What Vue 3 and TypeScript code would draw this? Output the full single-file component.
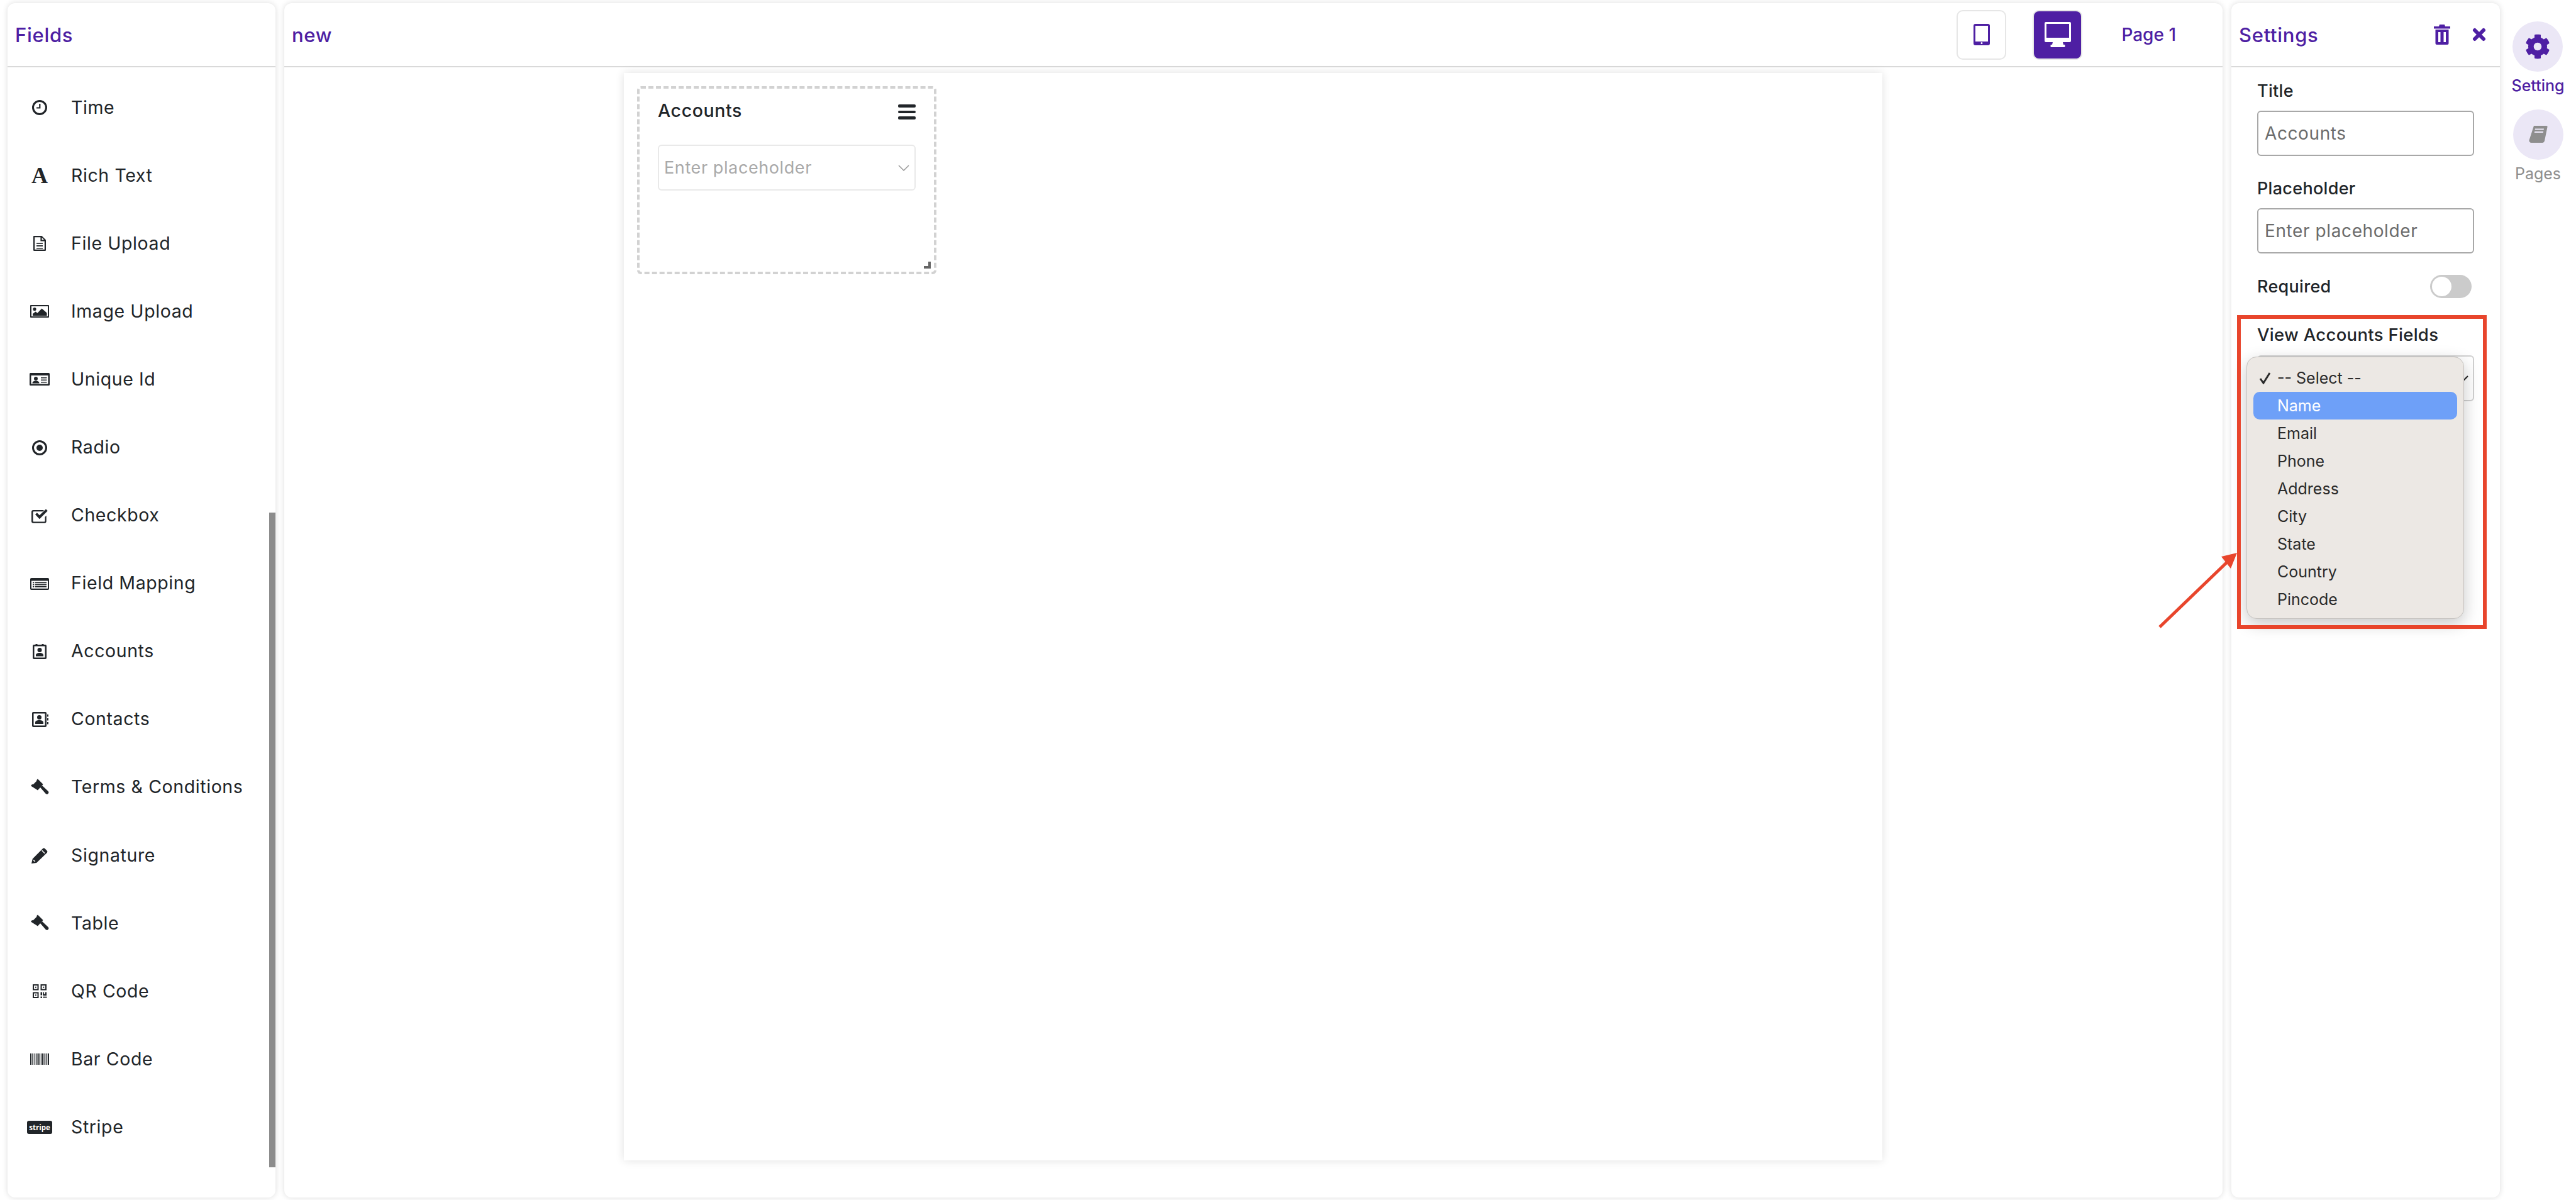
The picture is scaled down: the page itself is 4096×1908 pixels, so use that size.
<script setup lang="ts">
interface FieldRow {
  label: string
  icon: string
  glyph?: string
}

const fieldRows: FieldRow[] = [
  { label: 'Time', icon: 'clock' },
  { label: 'Rich Text', icon: '', glyph: 'A' },
  { label: 'File Upload', icon: 'file' },
  { label: 'Image Upload', icon: 'image' },
  { label: 'Unique Id', icon: 'card' },
  { label: 'Radio', icon: 'radio' },
  { label: 'Checkbox', icon: 'check' },
  { label: 'Field Mapping', icon: 'list' },
  { label: 'Accounts', icon: 'badge' },
  { label: 'Contacts', icon: 'book' },
  { label: 'Terms & Conditions', icon: 'gavel' },
  { label: 'Signature', icon: 'pencil' },
  { label: 'Table', icon: 'gavel' },
  { label: 'QR Code', icon: 'qr' },
  { label: 'Bar Code', icon: 'bars' },
  { label: 'Stripe', icon: '', glyph: 'stripe' }
]

const iconPaths: Record<string, string> = {
  clock:
    'M16 4a12 12 0 1 0 0 24a12 12 0 1 0 0-24z M16 7a9 9 0 1 1 0 18a9 9 0 1 1 0-18z M15.2 10h2.2v7.6H11v-2.1h4.2z',
  file:
    'M7 4h12.5L26 10.5V26.5a1.5 1.5 0 0 1-1.5 1.5h-17A1.5 1.5 0 0 1 6 26.5V5a1 1 0 0 1 1-1z M8.2 6.2v19.6h15.6V12.6h-6.4V6.2z M19.6 6.8v3.6h3.6z M11 15h10v1.8H11z M11 19h10v1.8H11z M11 23h10v1.6H11z',
  image:
    'M2 6h28a1 1 0 0 1 1 1v18a1 1 0 0 1-1 1H2a1 1 0 0 1-1-1V7a1 1 0 0 1 1-1z M3 8v16h26V8z M8 10a2.6 2.6 0 1 0 0 5.2a2.6 2.6 0 1 0 0-5.2z M5 23v-3l4.5-3.6 3 2.4 7-7.4 8 7v4.6z',
  card:
    'M1.5 6h29A1.5 1.5 0 0 1 32 7.5v17a1.5 1.5 0 0 1-1.5 1.5h-29A1.5 1.5 0 0 1 0 24.5v-17A1.5 1.5 0 0 1 1.5 6z M2.5 10v13.5h27V10z M10 12a3 3 0 1 0 0 6a3 3 0 1 0 0-6z M4.5 22.5c0-3 2.5-4 5.5-4s5.5 1 5.5 4z M18 13h9.5v1.6H18z M18 16.5h9.5v1.6H18z M18 20h9.5v1.6H18z',
  radio:
    'M16 4a12 12 0 1 0 0 24a12 12 0 1 0 0-24z M16 7a9 9 0 1 1 0 18a9 9 0 1 1 0-18z M16 11a5 5 0 1 0 0 10a5 5 0 1 0 0-10z',
  check:
    'M6 7h17l-2.2 2.2H6.5a1 1 0 0 0-1 1v14.3a1 1 0 0 0 1 1h17a1 1 0 0 0 1-1v-6.5l2.2-2.2v9a3 3 0 0 1-3 3H6a3 3 0 0 1-3-3V10a3 3 0 0 1 3-3z M9 14l2.8-2.8 4 4L26 5.5l2.8 2.8-13 12.9z',
  list:
    'M3 7h26a2 2 0 0 1 2 2v15a2 2 0 0 1-2 2H3a2 2 0 0 1-2-2V9a2 2 0 0 1 2-2z M3 11.5v12.3h26V11.5z M5 13.5h2.4v1.8H5z M5 16.8h2.4v1.8H5z M5 20h2.4v1.8H5z M9 13.5h18v1.8H9z M9 16.8h18v1.8H9z M9 20h18v1.8H9z',
  badge:
    'M7 5h2.5V4h3v1h7V4h3v1H25a2 2 0 0 1 2 2v19a2 2 0 0 1-2 2H7a2 2 0 0 1-2-2V7a2 2 0 0 1 2-2z M7.5 7.5v18h17v-18z M16 10a3.5 3.5 0 1 0 0 7a3.5 3.5 0 1 0 0-7z M10 23.5v-1.5c0-3 2.8-4 6-4s6 1 6 4v1.5z',
  book:
    'M6 4h19a2 2 0 0 1 2 2v20a2 2 0 0 1-2 2H6a2 2 0 0 1-2-2V6a2 2 0 0 1 2-2z M6.5 6.5v19h18v-19z M15.5 9a3.5 3.5 0 1 0 0 7a3.5 3.5 0 1 0 0-7z M9 23v-2c0-3 3-4 6.5-4s6.5 1 6.5 4v2z M28 8h2v3.5h-2z M28 14h2v3.5h-2z M28 20h2v3.5h-2z',
  gavel:
    'M13 2.5l8.5 8.5-8.5 9.500-11-7 2-2.500 1.500.5 6-6-.5-1z M17 16l3-3 9.500 9a2.600 2.600 0 0 1-4 3.800z',
  pencil:
    'M3 29l1.8-7.5L21 5.3c1-1 2.4-1 3.4 0l3.2 3.2c1 1 1 2.4 0 3.4L11 28z M19.2 8.8l4.4 4.4 1-1-4.4-4.4z M6 24.5l1.6 1.6 1.8-.5-2.8-2.8z',
  qr:
    'M5 5h9.5v9.5H5z M7 7v5.5h5.5V7z M8.8 8.8h2v2h-2z M17.5 5H27v9.5h-9.5z M19.5 7v5.5H25V7z M21.3 8.8h2v2h-2z M5 17.5h9.5V27H5z M7 19.5V25h5.5v-5.5z M8.8 21.3h2v2h-2z M17.5 17.5H20v5h-2.5z M21 17.5h1.8v3h2v-3H27v5.5h-5.5l-.5-1.5z M17.5 24.5H20V27h-2.5z M22 24.5h2V27h-2z M25.2 24.5H27V27h-1.8z',
  bars:
    'M1 7h1.2v18H1z M3 7h.6v18H3z M4.4 7h1.6v18H4.4z M7 7h.6v18H7z M8.6 7h.6v18h-.6z M10.2 7h1.2v18h-1.2z M12.4 7h.6v18h-.6z M14 7h1.6v18H14z M16.6 7h.6v18h-.6z M18.2 7h.8v18h-.8z M19.8 7h1.4v18h-1.4z M22 7h.6v18H22z M23.6 7h1.6v18h-1.6z M26 7h.8v18H26z M27.6 7h.6v18h-.6z M29 7h2v18h-2z'
}

const gearPath =
  'M487.4 315.7l-42.6-24.6c4.3-23.2 4.3-47 0-70.2l42.6-24.6c4.9-2.8 7.1-8.6 5.5-14-11.1-35.6-30-67.8-54.7-94.6-3.8-4.1-10-5.1-14.8-2.3L380.8 110c-17.9-15.4-38.5-27.3-60.8-35.1V25.8c0-5.6-3.9-10.5-9.4-11.7-36.7-8.2-74.3-7.8-109.2 0-5.5 1.2-9.4 6.1-9.4 11.7V75c-22.2 7.9-42.8 19.8-60.8 35.1L88.7 85.5c-4.9-2.8-11-1.9-14.8 2.3-24.7 26.7-43.6 58.9-54.7 94.6-1.7 5.4.6 11.2 5.5 14L67.3 221c-4.3 23.2-4.3 47 0 70.2l-42.6 24.6c-4.9 2.8-7.1 8.6-5.5 14 11.1 35.6 30 67.8 54.7 94.6 3.8 4.1 10 5.1 14.8 2.3l42.6-24.6c17.9 15.4 38.5 27.3 60.8 35.1v49.2c0 5.6 3.9 10.5 9.4 11.7 36.7 8.2 74.3 7.8 109.2 0 5.5-1.2 9.4-6.1 9.4-11.7v-49.2c22.2-7.9 42.8-19.8 60.8-35.1l42.6 24.6c4.9 2.8 11 1.9 14.8-2.3 24.7-26.7 43.6-58.9 54.7-94.6 1.5-5.5-.7-11.3-5.6-14.1zM256 336c-44.1 0-80-35.9-80-80s35.9-80 80-80 80 35.9 80 80-35.9 80-80 80z'

const menuOptions = ['Name', 'Email', 'Phone', 'Address', 'City', 'State', 'Country', 'Pincode']
</script>

<template>
  <div class="builder">
    <aside class="panel fields-panel">
      <header class="panel-head">
        <h2 class="panel-title">Fields</h2>
      </header>
      <div class="fields-scroll">
        <ul class="field-list">
          <li v-for="row in fieldRows" :key="row.label" class="field-row">
            <span class="field-icon">
              <span v-if="row.glyph === 'A'" class="glyph-a">A</span>
              <span v-else-if="row.glyph" class="glyph-stripe">stripe</span>
              <svg v-else viewBox="0 0 32 32" width="32" height="32">
                <path :d="iconPaths[row.icon]" fill="#212529" fill-rule="evenodd" />
              </svg>
            </span>
            <span class="field-label">{{ row.label }}</span>
          </li>
        </ul>
        <div class="scroll-thumb"></div>
      </div>
    </aside>

    <main class="panel canvas-panel">
      <header class="panel-head canvas-head">
        <h2 class="panel-title new-title">new</h2>
        <div class="device-btn">
          <svg viewBox="0 0 26 34" width="26" height="34">
            <path
              d="M3 0h20a3 3 0 0 1 3 3v28a3 3 0 0 1-3 3H3a3 3 0 0 1-3-3V3a3 3 0 0 1 3-3z M3 3v25h20V3z M13 29a1.5 1.5 0 1 0 0 3a1.5 1.5 0 1 0 0-3z"
              fill="#4e1fa3"
              fill-rule="evenodd"
            />
          </svg>
        </div>
        <div class="device-btn device-active">
          <svg viewBox="0 0 42 40" width="42" height="40">
            <path
              d="M2 0h38a2 2 0 0 1 2 2v28a2 2 0 0 1-2 2H29l1 4h1.5a1 1 0 0 1 1 1v2a1 1 0 0 1-1 1h-21a1 1 0 0 1-1-1v-2a1 1 0 0 1 1-1H12l1-4H2a2 2 0 0 1-2-2V2a2 2 0 0 1 2-2z M3 3v22h36V3z"
              fill="#fff"
              fill-rule="evenodd"
            />
          </svg>
        </div>
        <span class="page-name">Page 1</span>
      </header>
      <div class="canvas-body">
        <section class="paper">
          <div class="widget">
            <div class="widget-head">
              <span class="widget-title">Accounts</span>
              <span class="hamburger"><i></i><i></i><i></i></span>
            </div>
            <div class="widget-select">
              <span>Enter placeholder</span>
              <svg viewBox="0 0 18 10" width="18" height="10">
                <path d="M1 1l8 8 8-8" fill="none" stroke="#9a9a9a" stroke-width="1.5" />
              </svg>
            </div>
            <span class="resize-grip"></span>
          </div>
        </section>
      </div>
    </main>

    <aside class="panel settings-panel">
      <header class="panel-head settings-head">
        <h2 class="panel-title">Settings</h2>
        <svg class="trash" viewBox="0 0 26 32" width="26" height="32">
          <path
            d="M9 0h8l1 3h8v3.5H0V3h8z M2.5 8h21v22a2 2 0 0 1-2 2h-17a2 2 0 0 1-2-2z M7 12v16h3.5V12z M15.5 12v16H19V12z"
            fill="#4e1fa3"
            fill-rule="evenodd"
          />
        </svg>
        <svg class="close" viewBox="0 0 22 22" width="22" height="22">
          <path d="M4 4l14 14M18 4L4 18" stroke="#4e1fa3" stroke-width="6" stroke-linecap="round" />
        </svg>
      </header>
      <div class="settings-body">
        <label class="form-label">Title</label>
        <div class="form-input">Accounts</div>
        <label class="form-label next">Placeholder</label>
        <div class="form-input">Enter placeholder</div>
        <div class="required-row">
          <label class="form-label">Required</label>
          <span class="toggle"><i></i></span>
        </div>
        <label class="form-label view-label">View Accounts Fields</label>
        <div class="form-select">
          <svg viewBox="0 0 16 10" width="16" height="10">
            <path d="M1 1l7 7 7-7" fill="none" stroke="#222" stroke-width="2" />
          </svg>
        </div>

        <div class="native-menu">
          <div class="menu-item menu-first">
            <svg viewBox="0 0 20 20" width="20" height="20">
              <path d="M2 11l5 7L17 2" fill="none" stroke="#2b2b2b" stroke-width="3" />
            </svg>
            <span>-- Select --</span>
          </div>
          <div
            v-for="(option, idx) in menuOptions"
            :key="option"
            class="menu-item"
            :class="{ 'menu-active': idx === 0 }"
          >
            <span>{{ option }}</span>
          </div>
        </div>
      </div>
    </aside>

    <nav class="side-rail">
      <div class="rail-item rail-current">
        <span class="rail-circle">
          <svg viewBox="0 0 512 512" width="40" height="40">
            <path :d="gearPath" fill="#4e1fa3" />
          </svg>
        </span>
        <span class="rail-label">Setting</span>
      </div>
      <div class="rail-item">
        <span class="rail-circle">
          <svg viewBox="0 0 32 32" width="32" height="32">
            <path
              d="M9 2h20a1.5 1.5 0 0 1 1.5 2L26 26a4 4 0 0 1-3 3H5a3.5 3.5 0 0 1-3.5-4z M11 6.5l-.4 2h14l.4-2z M10.2 11l-.4 2h14l.4-2z"
              fill="#8e8e8e"
              fill-rule="evenodd"
            />
          </svg>
        </span>
        <span class="rail-label">Pages</span>
      </div>
    </nav>

    <!-- red annotation drawn on top of the screenshot -->
    <div class="note-box"></div>
    <svg class="note-arrow" viewBox="0 0 130 125" width="130" height="125">
      <path d="M3 119L110 16" stroke="#e8452c" stroke-width="5" fill="none" />
      <path d="M126 1L116 26 101 7z" fill="#e8452c" />
    </svg>
  </div>
</template>

<style>
html,
body {
  margin: 0;
  background: #fff;
}
</style>

<style scoped>
.builder {
  position: relative;
  display: flex;
  gap: 14px;
  box-sizing: border-box;
  width: 4096px;
  height: 1908px;
  padding: 5px 0 4px 12px;
  font-family: Inter, 'Noto Sans', sans-serif;
  color: #212529;
  overflow: hidden;
}

.panel {
  display: flex;
  flex-direction: column;
  background: #fff;
  border-radius: 12px;
  box-shadow: 0 0 10px rgba(0, 0, 0, 0.14);
}

.fields-panel {
  width: 426px;
}

.canvas-panel {
  width: 3082px;
}

.settings-panel {
  position: relative;
  width: 427px;
}

.panel-head {
  display: flex;
  align-items: center;
  flex: none;
  height: 100px;
  padding: 0 12px;
  border-bottom: 2px solid #d9d9d9;
}

.panel-title {
  margin: 0;
  font-size: 31px;
  font-weight: 500;
  letter-spacing: 0.7px;
  color: #4e1fa3;
}

.fields-scroll {
  position: relative;
  flex: 1;
}

.field-list {
  list-style: none;
  margin: 0;
  padding: 10px 0 0;
}

.field-row {
  display: flex;
  align-items: center;
  height: 108.1px;
}

.field-icon {
  display: flex;
  justify-content: center;
  align-items: center;
  width: 36px;
  margin-left: 33px;
  margin-right: 32px;
}

.glyph-a {
  font-family: 'Liberation Serif', serif;
  font-weight: 700;
  font-size: 36px;
  line-height: 32px;
}

.glyph-stripe {
  padding: 0 3px;
  background: #212529;
  border-radius: 3px;
  color: #fff;
  font-family: 'Open Sans', sans-serif;
  font-weight: 700;
  font-size: 11.5px;
  line-height: 21px;
}

.field-label {
  margin-bottom: 2px;
  font-size: 28.5px;
  letter-spacing: 0.6px;
}

.scroll-thumb {
  position: absolute;
  top: 708px;
  right: 0;
  width: 10px;
  height: 1041px;
  background: #8c8c8c;
}

.canvas-head {
  padding-right: 74px;
}

.new-title {
  flex: 1;
}

.device-btn {
  display: flex;
  justify-content: center;
  align-items: center;
  box-sizing: border-box;
  width: 79px;
  height: 79px;
  margin-right: 42px;
  border: 2px solid #e6e6e6;
  border-radius: 10px;
  background: #fff;
}

.device-active {
  background: #4e1fa3;
  margin-right: 62px;
}

.page-name {
  font-size: 28px;
  font-weight: 500;
  color: #4e1fa3;
}

.canvas-body {
  flex: 1;
  display: flex;
  padding: 9px 0 0 540px;
}

.paper {
  box-sizing: border-box;
  width: 2001px;
  height: 1729px;
  padding: 21px 0 0 21px;
  background: #fff;
  box-shadow: 0 0 14px rgba(0, 0, 0, 0.12);
}

.widget {
  position: relative;
  box-sizing: border-box;
  width: 476px;
  height: 299px;
  padding: 16px 29px;
  border: 4px dashed #d2d2d2;
  border-radius: 6px;
}

.widget-head {
  display: flex;
  justify-content: space-between;
  align-items: center;
  height: 36px;
}

.widget-title {
  font-size: 28.5px;
  font-weight: 500;
  letter-spacing: 0.6px;
}

.hamburger {
  display: flex;
  flex-direction: column;
  gap: 5px;
  margin-top: 6px;
}

.hamburger i {
  display: block;
  width: 28px;
  height: 4.5px;
  border-radius: 2px;
  background: #212529;
}

.widget-select {
  display: flex;
  justify-content: space-between;
  align-items: center;
  box-sizing: border-box;
  height: 73px;
  margin-top: 37px;
  padding: 0 8px 0 8px;
  border: 2px solid #e9e9e9;
  border-radius: 6px;
  font-size: 27px;
  letter-spacing: 0.6px;
  color: #a9a9a9;
}

.resize-grip {
  position: absolute;
  right: 5px;
  bottom: 5px;
  width: 11px;
  height: 11px;
  box-sizing: border-box;
  border-right: 4px solid #666;
  border-bottom: 4px solid #666;
}

.settings-head {
  padding-right: 22px;
}

.settings-head .panel-title {
  flex: 1;
}

.trash {
  margin-right: 35px;
}

.settings-body {
  display: flex;
  flex-direction: column;
  padding: 18px 41px 0;
}

.form-label {
  font-size: 27px;
  font-weight: 500;
  line-height: 40px;
  letter-spacing: 0.3px;
}

.form-label.next {
  margin-top: 32px;
}

.form-input {
  display: flex;
  align-items: center;
  box-sizing: border-box;
  height: 72px;
  margin-top: 11px;
  padding-left: 10px;
  border: 2px solid #a8a8a8;
  border-radius: 6px;
  font-size: 28px;
  letter-spacing: 0.6px;
  color: #6c6c6c;
}

.required-row {
  display: flex;
  justify-content: space-between;
  align-items: center;
  height: 37px;
  margin-top: 34px;
  padding-right: 4px;
}

.toggle {
  display: flex;
  align-items: center;
  box-sizing: border-box;
  width: 66px;
  height: 37px;
  padding-left: 3px;
  border-radius: 19px;
  background: #cbcbcb;
}

.toggle i {
  display: block;
  width: 31px;
  height: 31px;
  border-radius: 50%;
  background: #fff;
}

.view-label {
  margin-top: 38px;
  font-size: 27.5px;
}

.form-select {
  display: flex;
  justify-content: flex-end;
  align-items: flex-start;
  height: 73px;
  margin-top: 13px;
  padding: 30px 7px 0 0;
  box-sizing: border-box;
  border: 2px solid #d0d0d0;
  border-radius: 6px;
}

.native-menu {
  position: absolute;
  left: 24px;
  top: 562px;
  box-sizing: border-box;
  width: 346px;
  height: 417px;
  padding: 11px 10px;
  background: #ece8e4;
  border: 1px solid #c6c3c0;
  border-radius: 16px;
  box-shadow: 0 8px 26px rgba(0, 0, 0, 0.22);
}

.menu-item {
  position: relative;
  display: flex;
  align-items: center;
  height: 44px;
  padding-left: 38px;
  border-radius: 10px;
  font-size: 25px;
  color: #2b2b2b;
}

.menu-first svg {
  position: absolute;
  left: 9px;
  top: 12px;
}

.menu-active {
  background: #6ea0f8;
  color: #fff;
}

.side-rail {
  display: flex;
  flex-direction: column;
  align-items: center;
  flex: 1;
  margin-left: -14px;
  padding: 29px 0 0;
}

.rail-item {
  display: flex;
  flex-direction: column;
  align-items: center;
  height: 140px;
}

.rail-circle {
  display: flex;
  justify-content: center;
  align-items: center;
  width: 80px;
  height: 80px;
  border-radius: 50%;
  background: #ebe7f6;
}

.rail-label {
  margin-top: 7px;
  font-size: 25px;
  font-weight: 400;
  color: #8e8e8e;
}

.rail-current .rail-label {
  font-weight: 500;
  color: #4e1fa3;
}

.note-box {
  position: absolute;
  left: 3557px;
  top: 501px;
  box-sizing: border-box;
  width: 397px;
  height: 499px;
  border: 6px solid #e8452c;
}

.note-arrow {
  position: absolute;
  left: 3431px;
  top: 878px;
}
</style>
